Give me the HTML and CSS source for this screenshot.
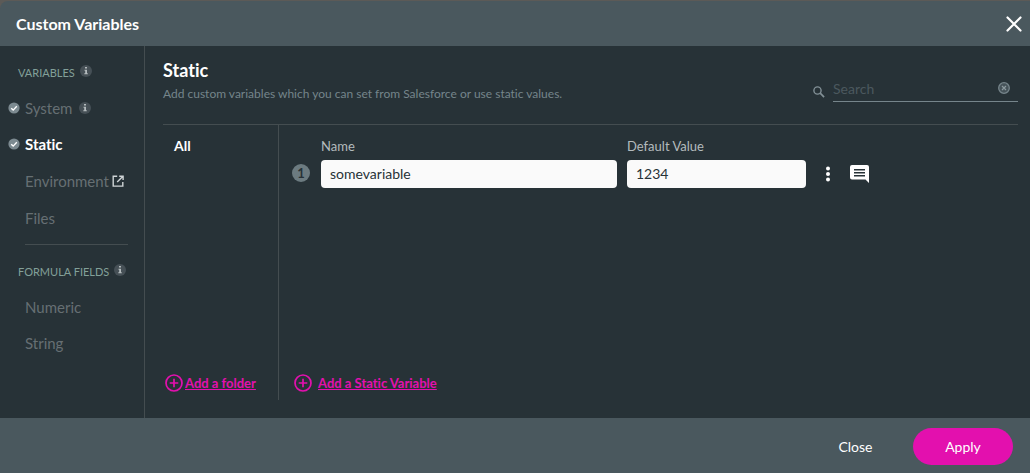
FILE: index.html
```html
<!DOCTYPE html>
<html lang="en">
<head>
<meta charset="utf-8">
<title>Custom Variables</title>
<link rel="stylesheet" href="styles.css">
</head>
<body>
<svg class="sprite" aria-hidden="true">
  <symbol id="i-info" viewBox="0 0 12 12"><circle cx="6" cy="6" r="6" fill="#465056"/><path d="M5 2h2v1.5H5zM4.5 4.7H7v3.6h.8v1H4.3v-1h.9V5.7h-.7z" fill="#b4bbbd"/></symbol>
  <symbol id="i-check" viewBox="0 0 12 12"><circle cx="6" cy="6" r="5.6" fill="#7c8a90"/><path d="M3.2 6.2l2 1.9 3.6-3.9" fill="none" stroke="#fff" stroke-width="1.4"/></symbol>
  <symbol id="i-plus" viewBox="0 0 18 18"><circle cx="9" cy="9" r="8" fill="none" stroke="#e310ae" stroke-width="1.7"/><path d="M9 4.7v8.6M4.7 9h8.6" stroke="#e310ae" stroke-width="1.7"/></symbol>
</svg>
<main class="modal">
  <header class="modal-header">
    <h1 class="modal-title">Custom Variables</h1>
    <button class="icon-button" type="button" aria-label="Close dialog">
      <svg width="16" height="16" viewBox="0 0 16 16"><path d="M1.5 1.5l13 13M14.5 1.5l-13 13" stroke="#fff" stroke-width="2.2" stroke-linecap="round"/></svg>
    </button>
  </header>
  <div class="modal-body">
    <nav class="sidebar">
      <h2 class="group-title">VARIABLES <svg class="info"><use href="#i-info"/></svg></h2>
      <a class="nav-item checked" href="#system"><svg class="check"><use href="#i-check"/></svg>System<svg class="info nav-info"><use href="#i-info"/></svg></a>
      <a class="nav-item checked active" href="#static"><svg class="check"><use href="#i-check"/></svg>Static</a>
      <a class="nav-item nav-tall" href="#environment">Environment<svg class="external" viewBox="0 0 12 12"><path d="M5.2 1.3H1.2v9.8h9.6V7M7.2 1.2h3.9v3.9M11 1.2L5.2 7" fill="none" stroke="#cfd4d6" stroke-width="1.4"/></svg></a>
      <a class="nav-item" href="#files">Files</a>
      <hr class="nav-divider">
      <h2 class="group-title">FORMULA FIELDS <svg class="info"><use href="#i-info"/></svg></h2>
      <a class="nav-item" href="#numeric">Numeric</a>
      <a class="nav-item" href="#string">String</a>
    </nav>
    <section class="content">
      <div class="content-head">
        <div>
          <h2 class="content-title">Static</h2>
          <p class="content-note">Add custom variables which you can set from Salesforce or use static values.</p>
        </div>
        <div class="search">
          <svg class="search-icon" viewBox="0 0 12 12"><circle cx="4.5" cy="4.5" r="3.6" fill="none" stroke="#829096" stroke-width="1.4"/><path d="M7.2 7.2l3.9 3.9" stroke="#829096" stroke-width="1.7"/></svg>
          <div class="search-field">
            <input class="search-input" type="text" placeholder="Search" aria-label="Search">
            <button class="icon-button" type="button" aria-label="Clear search"><svg width="12" height="12" viewBox="0 0 12 12"><circle cx="6" cy="6" r="5.3" fill="#465359" stroke="#76858b" stroke-width="1.3"/><path d="M4 4l4 4M8 4L4 8" stroke="#8b999e" stroke-width="1.2"/></svg></button>
          </div>
        </div>
      </div>
      <div class="columns">
        <div class="folders">
          <a class="folder" href="#all">All</a>
          <button class="add" type="button"><svg class="plus"><use href="#i-plus"/></svg><span class="add-text">Add a folder</span></button>
        </div>
        <div class="variables">
          <div class="variable">
            <span class="number">1</span>
            <div class="field name-field">
              <label class="label" for="name">Name</label>
              <input class="input" id="name" type="text" value="somevariable">
            </div>
            <div class="field value-field">
              <label class="label" for="value">Default Value</label>
              <input class="input" id="value" type="text" value="1234">
            </div>
            <div class="actions">
              <button class="icon-button" type="button" aria-label="More"><svg width="6" height="16" viewBox="0 0 6 16"><g fill="#fff"><circle cx="3" cy="2.5" r="2"/><circle cx="3" cy="8" r="2"/><circle cx="3" cy="13.5" r="2"/></g></svg></button>
              <button class="icon-button" type="button" aria-label="Comment"><svg width="19" height="18" viewBox="0 0 19 18"><path d="M2 0h15a2 2 0 0 1 2 2v16l-3.5-3.5H2a2 2 0 0 1-2-2V2a2 2 0 0 1 2-2z" fill="#fff"/><path d="M4 4.7h11M4 7.7h11M4 10.7h11" stroke="#273237" stroke-width="1.5"/></svg></button>
            </div>
          </div>
          <button class="add add-wide" type="button"><svg class="plus"><use href="#i-plus"/></svg><span class="add-text">Add a Static Variable</span></button>
        </div>
      </div>
    </section>
  </div>
  <footer class="modal-footer">
    <button class="button" type="button">Close</button>
    <button class="button primary" type="button">Apply</button>
  </footer>
</main>
</body>
</html>
```
FILE: styles.css
```css
* { box-sizing: border-box; }
body { margin: 0; background: #5c5a57; font-family: Lato, "Liberation Sans", sans-serif; font-size: 13px; font-variant-ligatures: none; color: #fff; }
h1, h2, p { margin: 0; }
button { margin: 0; padding: 0; border: 0; background: none; color: inherit; font: inherit; cursor: pointer; }
a { color: inherit; text-decoration: none; }
svg { flex: none; display: block; }
.sprite { position: absolute; width: 0; height: 0; }
.icon-button { display: flex; }

.modal { display: flex; flex-direction: column; min-height: 100vh; padding-top: 1px; }
.modal-header { display: flex; align-items: center; justify-content: space-between; height: 45px; padding: 0 8px 0 16px; background: #4a585e; border-radius: 8px 0 0 0; }
.modal-title { font-size: 16px; font-weight: 700; }
.modal-body { flex: 1; display: flex; background: #273237; }
.modal-footer { display: flex; align-items: center; justify-content: flex-end; gap: 40px; height: 55px; padding: 2px 17px 0 0; background: #4a585e; }

.sidebar { width: 145px; padding: 8px 0; border-right: 1px solid #444d50; }
.group-title { display: flex; align-items: center; gap: 5px; height: 36px; padding-left: 18px; font-size: 11px; font-weight: 400; color: #83a099; }
.info { width: 12px; height: 12px; margin-bottom: 3px; }
.nav-item { display: flex; align-items: center; height: 36px; padding-left: 25px; font-size: 15px; color: #666f73; }
.nav-item.checked { padding-left: 8px; }
.nav-item.active { color: #fff; font-weight: 700; }
.nav-tall { height: 38px; }
.check { width: 12px; height: 12px; margin-right: 5px; }
.nav-info { margin-left: 7px; margin-bottom: 0; }
.external { width: 12px; height: 12px; margin-left: 3px; }
.nav-divider { margin: 8px 16px 8px 25px; border: 0; border-top: 1px solid #444d50; }

.content { flex: 1; display: flex; flex-direction: column; padding: 0 12px 18px 18px; }
.content-head { display: flex; justify-content: space-between; height: 79px; padding-top: 12px; border-bottom: 1px solid #444d50; }
.content-title { font-size: 18px; line-height: 24px; font-weight: 700; }
.content-note { margin-top: 3px; font-size: 12px; line-height: 18px; color: #75858b; }
.search { display: flex; align-items: flex-end; gap: 8px; height: 44px; }
.search-icon { width: 12px; height: 12px; margin-bottom: 4px; }
.search-field { display: flex; align-items: center; width: 185px; height: 27px; padding-right: 8px; border-bottom: 1px solid #76858b; }
.search-input { flex: 1; min-width: 0; padding: 0; border: 0; outline: 0; background: none; color: #fff; font: inherit; font-size: 14px; }
.search-input::placeholder { color: #4b585e; opacity: 1; }

.columns { flex: 1; display: flex; }
.folders { display: flex; flex-direction: column; justify-content: space-between; width: 116px; border-right: 1px solid #444d50; padding: 11px 0 8px 2px; }
.folder { padding-left: 9px; font-size: 14px; line-height: 20px; font-weight: 700; }
.add { display: flex; align-items: center; gap: 2px; color: #e310ae; font-weight: 700; line-height: 18px; }
.add-wide { gap: 6px; }
.add-text { text-decoration: underline; }
.plus { width: 18px; height: 18px; }
.variables { flex: 1; display: flex; flex-direction: column; justify-content: space-between; padding: 12px 0 8px 15px; }
.variable { display: flex; align-items: flex-end; }
.number { width: 18px; margin: 0 11px 6px -2px; border-radius: 50%; background: #6c7b80; color: #273237; font-weight: 700; line-height: 18px; text-align: center; }
.field { display: flex; flex-direction: column; gap: 4px; }
.name-field { flex: 0 1 296px; margin-right: 10px; }
.value-field { flex: 0 1 179px; }
.label { line-height: 19px; color: #b4bbbd; }
.input { width: 100%; height: 28px; padding: 0 9px 2px; border: 0; border-radius: 4px; background: #fafafa; color: #273237; font: inherit; font-size: 14px; }
.actions { display: flex; align-items: center; gap: 19px; height: 28px; margin-left: 19px; }

.button { width: 35px; height: 37px; font-size: 14px; }
.primary { width: 100px; border-radius: 20px; background: #e310ae; }
```
